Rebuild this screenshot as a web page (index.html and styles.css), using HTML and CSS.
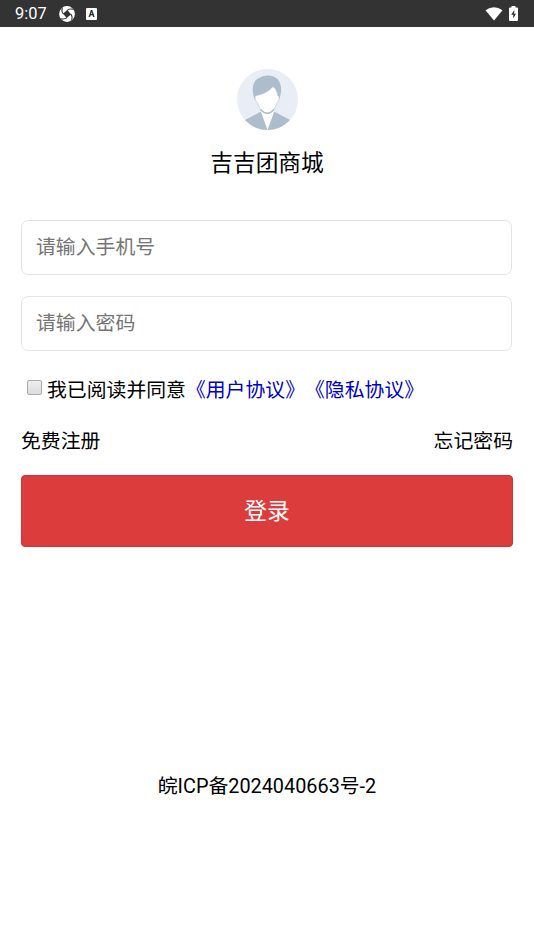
FILE: index.html
```html
<!DOCTYPE html>
<html lang="zh-CN">
<head>
<meta charset="utf-8">
<title>登录</title>
<link rel="stylesheet" href="styles.css">
</head>
<body>
<header class="status">
  <span class="time">9:07</span>
  <svg class="swirl" viewBox="0 0 16 16"><circle cx="8" cy="8" r="7.900" fill="#fff"/><path d="M8.500 4L12 8.500 7.500 12 4 7.500z" fill="#333"/><g fill="none" stroke="#333" stroke-width="1.100"><path d="M8 4.500Q10 2.200 14 3.300"/><path d="M11.500 8Q13.800 10 12.700 14"/><path d="M8 11.500Q6 13.800 2 12.700"/><path d="M4.500 8Q2.200 6 3.300 2"/></g></svg>
  <span class="badge">A</span>
  <span class="spacer"></span>
  <svg class="wifi" viewBox="0 0 18 14"><path d="M.5 3.300Q9-2.700 17.500 3.300L9 13.500z" fill="#fff"/></svg>
  <svg class="battery" viewBox="0 0 9 15"><path d="M2.500 0h4v1.500H8a1 1 0 0 1 1 1V14a1 1 0 0 1-1 1H1a1 1 0 0 1-1-1V2.500a1 1 0 0 1 1-1h1.500z" fill="#fff"/><path d="M5.300 4L2.200 8.700h2V12.500L7 7.700H5.200z" fill="#333"/></svg>
</header>
<main class="login">
  <svg class="avatar" viewBox="0 0 61 61">
    <defs><clipPath id="disc"><circle cx="30.500" cy="30.500" r="30.500"/></clipPath></defs>
    <g clip-path="url(#disc)">
      <path d="M0 0h61v61H0z" fill="#e9edf5"/>
      <path d="M23 43L7 51.500V61h47v-9.500L38 43z" fill="#adbdcc"/>
      <path d="M24 38v5L30.500 61l6.500-18v-5z" fill="#fff"/>
      <path d="M18 31C14.500 23 14.500 12 22 9C30 4 40 7 42.500 13C45 18 44.500 25 42 31z" fill="#adbdcc"/>
      <path d="M19.200 26.500C26 25.500 32 22 36 17.500Q40 20.500 40.800 26.500Q43 27 42 30.500Q41.300 33.500 40 33.500C38.500 40 34.500 44.300 30.300 44.300S22 40 20.500 33.500Q19 33.300 18.300 30.500Q17.300 27 19.200 26.500z" fill="#fff" stroke="#adbdcc" stroke-width=".5"/>
      <path d="M23.500 40.500Q30.300 48 37 40.500" fill="none" stroke="#adbdcc" stroke-width="1.300"/>
    </g>
  </svg>
  <h1 class="title">吉吉团商城</h1>
  <form class="form">
    <input class="field" type="tel" placeholder="请输入手机号">
    <input class="field" type="password" placeholder="请输入密码">
    <label class="agree"><input class="check" type="checkbox"><span>我已阅读并同意<a class="doc">《用户协议》</a><a class="doc">《隐私协议》</a></span></label>
    <div class="links"><span>免费注册</span><span>忘记密码</span></div>
    <button class="submit" type="button">登录</button>
  </form>
  <footer class="icp">皖ICP备2024040663号-2</footer>
</main>
</body>
</html>
```
FILE: styles.css
```css
* { box-sizing: border-box; }
body {
  margin: 0;
  background: #fff;
  color: #000;
  font: 19.85px/30px Roboto, "Noto Sans CJK SC", sans-serif;
  text-spacing-trim: space-all;
}
.status {
  display: flex;
  align-items: center;
  height: 27px;
  padding: 0 16px 0 15px;
  background: #333;
  color: #fff;
}
.time { width: 44px; font-size: 16.4px; line-height: 27px; }
.swirl { width: 16px; height: 16px; }
.badge {
  width: 11px;
  height: 12px;
  margin-left: 11px;
  border-radius: 1px;
  background: #fff;
  color: #222;
  font-size: 9px;
  font-weight: 700;
  line-height: 12px;
  text-align: center;
}
.spacer { flex: 1; }
.wifi { width: 18px; height: 14px; }
.battery { width: 9px; height: 15px; margin-left: 6px; }
.login {
  display: flex;
  flex-direction: column;
  align-items: center;
  padding: 42px 21px 0;
}
.avatar { width: 61px; height: 61px; }
.title { margin: 17px 0 0; font-size: 22.7px; font-weight: 400; line-height: 34px; }
.form { display: flex; flex-direction: column; width: 492px; margin-top: 39px; }
.field {
  width: 491px;
  height: 55px;
  margin: 0 0 21px;
  padding: 0 14px 1px;
  border: 1px solid #e4e4e4;
  border-radius: 7px;
  outline: 0;
  background: #fff;
  font: inherit;
}
.field::placeholder { color: #757575; }
.agree { display: flex; align-items: center; height: 30px; margin-top: 4px; padding-left: 6px; }
.check {
  appearance: none;
  width: 15px;
  height: 15px;
  margin: 0 5px 7px 0;
  border: 1px solid #aaa;
  border-radius: 2px;
  background: linear-gradient(#eee, #dcdcdc);
}
.doc { color: #00c; }
.links { display: flex; justify-content: space-between; margin-top: 21px; }
.submit {
  height: 72px;
  margin-top: 18px;
  padding: 1px 0 0;
  border: 1px solid #cf3238;
  border-radius: 4px;
  background: #dc3c3c;
  color: #fff;
  font: 22.7px/34px Roboto, "Noto Sans CJK SC", sans-serif;
}
.icp { margin-top: 225px; }
```
